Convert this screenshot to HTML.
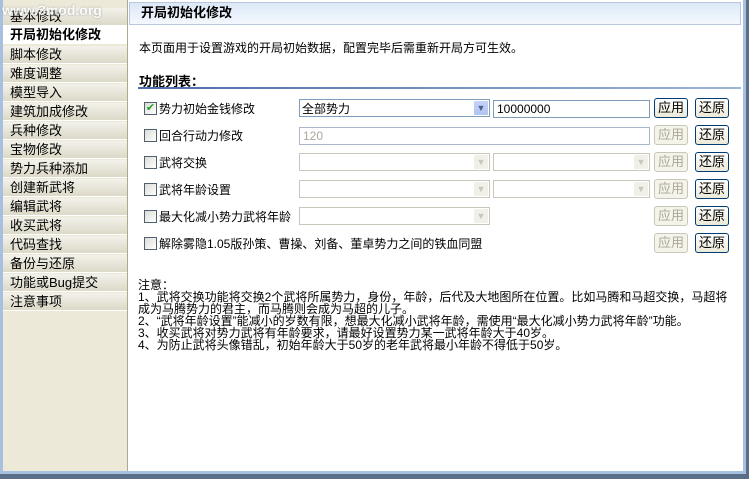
<!DOCTYPE html>
<html><head><meta charset="utf-8"><style>
*{margin:0;padding:0;box-sizing:border-box}
body{width:749px;height:479px;overflow:hidden;background:#5a6e8a;font-family:"Liberation Sans","Noto Sans CJK SC","WenQuanYi Zen Hei",sans-serif;font-size:12px;color:#000;position:relative}
.win{position:absolute;left:0;top:0;width:746px;height:474px;background:#fff;border-left:3px solid #a8c0e0;border-bottom:3px solid #a8c0e0;border-right:3px solid #a8c0e0}
.side{position:absolute;left:3px;top:0;width:125px;height:471px;background:#ece9d8;border-right:1px solid #b0a88a}
.it{position:absolute;left:0;width:124px;height:18px;background:linear-gradient(#f3f2ea,#dcd9c8);border-bottom:1px solid #fff;padding-left:7px;line-height:18px;font-size:13px}
.it.sel{background:#fff;font-weight:bold}
.hdr{position:absolute;left:129px;top:2px;width:612px;height:23px;background:linear-gradient(#dce8f8,#f4f8fd);border:1px solid #b8c8dc;font-weight:bold;font-size:13px;padding-left:11px;line-height:20px}
.a{position:absolute;white-space:nowrap}
.cb{position:absolute;left:144px;width:13px;height:13px;border:1px solid #506070;background:linear-gradient(135deg,#dcdcd7,#fff)}
.lbl{position:absolute;left:159px;font-size:12px;white-space:nowrap}
.combo{position:absolute;height:18px;border:1px solid #7f9db9;background:#fff}
.combo .ar{position:absolute;right:1px;top:1px;width:14px;height:14px;background:linear-gradient(#c6d3f7,#b0c4f2);border-radius:1px;color:#4d6185;font-size:9px;text-align:center;line-height:14px}
.combo.d{border-color:#c9c7ba}.combo.d .ar{background:#f0efe8;color:#c9c7ba}
.tb{position:absolute;height:18px;border:1px solid #7f9db9;background:#fff;padding-left:3px;line-height:16px;font-size:12px}
.btn{position:absolute;width:34px;height:20px;border:1px solid #003c74;border-radius:3px;background:linear-gradient(#fff,#ece9d8);text-align:center;line-height:18px;font-size:13px}
.btn.d{border-color:#c9c7ba;color:#aca899;background:#f5f4ea}
</style></head><body>
<div class="win"></div>
<div class="side">
<div class="it" style="top:8px">基本修改</div>
<div class="it sel" style="top:26px">开局初始化修改</div>
<div class="it" style="top:46px">脚本修改</div>
<div class="it" style="top:65px">难度调整</div>
<div class="it" style="top:84px">模型导入</div>
<div class="it" style="top:103px">建筑加成修改</div>
<div class="it" style="top:122px">兵种修改</div>
<div class="it" style="top:141px">宝物修改</div>
<div class="it" style="top:160px">势力兵种添加</div>
<div class="it" style="top:179px">创建新武将</div>
<div class="it" style="top:198px">编辑武将</div>
<div class="it" style="top:217px">收买武将</div>
<div class="it" style="top:236px">代码查找</div>
<div class="it" style="top:255px">备份与还原</div>
<div class="it" style="top:274px">功能或Bug提交</div>
<div class="it" style="top:293px">注意事项</div>
</div>
<div class="a" style="left:2px;top:2px;color:#fff;font-weight:bold;font-size:14px;text-shadow:0 0 2px #888;opacity:.8">www.3mod.org</div>
<div class="hdr">开局初始化修改</div>
<div class="a" style="left:139px;top:39px">本页面用于设置游戏的开局初始数据，配置完毕后需重新开局方可生效。</div>
<div class="a" style="left:139px;top:71px;font-weight:bold;font-size:13px">功能列表：</div>
<div class="a" style="left:138px;top:87px;width:603px;height:2px;background:linear-gradient(90deg,#4a6ea8,#9db4d8)"></div>

<div class="cb" style="top:102px;color:#21a121;font-size:11px;line-height:11px;text-align:center">✔</div><div class="lbl" style="top:100px">势力初始金钱修改</div>
<div class="combo" style="left:299px;top:99px;width:191px"><span style="position:absolute;left:2px;top:0;font-size:12px">全部势力</span><div class="ar">▼</div></div>
<div class="tb" style="left:493px;top:100px;width:157px">10000000</div>
<div class="btn" style="left:654px;top:98px">应用</div><div class="btn" style="left:695px;top:98px">还原</div>

<div class="cb" style="top:129px"></div><div class="lbl" style="top:127px">回合行动力修改</div>
<div class="tb" style="left:299px;top:127px;width:351px;color:#aca899;border-color:#a9b8c8">120</div>
<div class="btn d" style="left:654px;top:125px">应用</div><div class="btn" style="left:695px;top:125px">还原</div>

<div class="cb" style="top:156px"></div><div class="lbl" style="top:154px">武将交换</div>
<div class="combo d" style="left:299px;top:153px;width:191px"><div class="ar">▼</div></div>
<div class="combo d" style="left:493px;top:153px;width:157px"><div class="ar">▼</div></div>
<div class="btn d" style="left:654px;top:152px">应用</div><div class="btn" style="left:695px;top:152px">还原</div>

<div class="cb" style="top:183px"></div><div class="lbl" style="top:181px">武将年龄设置</div>
<div class="combo d" style="left:299px;top:180px;width:191px"><div class="ar">▼</div></div>
<div class="combo d" style="left:493px;top:180px;width:157px"><div class="ar">▼</div></div>
<div class="btn d" style="left:654px;top:179px">应用</div><div class="btn" style="left:695px;top:179px">还原</div>

<div class="cb" style="top:210px"></div><div class="lbl" style="top:208px">最大化减小势力武将年龄</div>
<div class="combo d" style="left:299px;top:207px;width:191px"><div class="ar">▼</div></div>
<div class="btn d" style="left:654px;top:206px">应用</div><div class="btn" style="left:695px;top:206px">还原</div>

<div class="cb" style="top:237px"></div><div class="lbl" style="top:235px">解除雾隐1.05版孙策、曹操、刘备、董卓势力之间的铁血同盟</div>
<div class="btn d" style="left:654px;top:233px">应用</div><div class="btn" style="left:695px;top:233px">还原</div>

<div class="a" style="left:138px;top:279px;line-height:12px;font-size:12px">注意：<br>1、武将交换功能将交换2个武将所属势力，身份，年龄，后代及大地图所在位置。比如马腾和马超交换，马超将<br>成为马腾势力的君主，而马腾则会成为马超的儿子。<br>2、“武将年龄设置”能减小的岁数有限，想最大化减小武将年龄，需使用“最大化减小势力武将年龄”功能。<br>3、收买武将对势力武将有年龄要求，请最好设置势力某一武将年龄大于40岁。<br>4、为防止武将头像错乱，初始年龄大于50岁的老年武将最小年龄不得低于50岁。</div>
</body></html>
